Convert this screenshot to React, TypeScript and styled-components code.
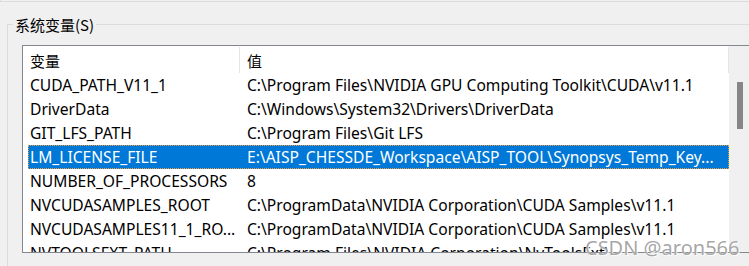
import React from 'react';
import styled, { createGlobalStyle } from 'styled-components';

const GlobalStyle = createGlobalStyle`
  html, body {
    margin: 0;
    padding: 0;
    background: #f0f0f0;
    overflow: hidden;
  }
  body {
    font-family: "Noto Sans", "Noto Sans CJK SC", sans-serif;
    font-size: 15.6px;
    color: #000;
  }
`;

const Page = styled.div`
  position: relative;
  width: 749px;
  height: 266px;
  overflow: hidden;
`;

const PrevGroupEdge = styled.div`
  height: 1px;
  border-left: 1px solid #dcdcdc;
  border-bottom: 1px solid #dcdcdc;
`;

const GroupBox = styled.fieldset`
  margin: 11px 0 0 7px;
  padding: 0 0 40px 0;
  width: 800px;
  border: 1px solid #dcdcdc;
  border-right: none;
  border-bottom: none;
`;

const GroupTitle = styled.legend`
  margin-left: 5px;
  padding: 2px 2px 0;
  line-height: 20px;
  font-family: "Noto Sans CJK SC", sans-serif;
  font-size: 15px;
`;

const ListBox = styled.div`
  margin: 10px 0 0 14px;
  display: flex;
  width: 727px;
  height: 206px;
  border: 1px solid #828790;
  background: #fff;
`;

const ListInner = styled.div`
  flex: 1;
  min-width: 0;
  overflow: hidden;
`;

const Header = styled.div`
  display: grid;
  grid-template-columns: 217px 1fr;
  height: 27px;
`;

const HeaderCell = styled.div<{ $divider?: boolean }>`
  display: flex;
  align-items: center;
  padding-left: 7px;
  font-family: "Noto Sans CJK SC", sans-serif;
  font-size: 15px;
  border-right: ${(p) => (p.$divider ? '1px solid #e5e5e5' : 'none')};
  margin: 1px 0 0;
`;

const Row = styled.div<{ $selected?: boolean }>`
  display: grid;
  grid-template-columns: 212px 1fr;
  height: 24px;
  margin-left: 5px;
  box-sizing: border-box;
  background: ${(p) => (p.$selected ? '#0078d7' : 'transparent')};
  color: ${(p) => (p.$selected ? '#fff' : '#000')};
  outline: ${(p) => (p.$selected ? '1px dotted #f29b3a' : 'none')};
  outline-offset: -1px;
`;

const Cell = styled.div<{ $pad: number }>`
  display: flex;
  align-items: center;
  padding-left: ${(p) => p.$pad}px;
  padding-right: 2px;
  white-space: nowrap;
  overflow: hidden;
`;

const CellText = styled.span`
  overflow: hidden;
  text-overflow: ellipsis;
`;

const ScrollTrack = styled.div`
  width: 21px;
  background: #f0f0f0;
  display: flex;
  flex-direction: column;
  align-items: center;
  padding-top: 36px;
  box-sizing: border-box;
`;

const ScrollThumb = styled.div`
  width: 6px;
  height: 47px;
  background: #868686;
`;

const Watermark = styled.div`
  position: absolute;
  left: 585px;
  top: 234px;
  font-family: "Noto Sans", sans-serif;
  font-size: 20px;
  color: rgba(128, 128, 128, 0.7);
  text-shadow: 0 0 1px #fff, 1px 1px 0 rgba(255, 255, 255, 0.8);
  white-space: nowrap;
`;

type EnvVar = { name: string; value: string; selected?: boolean };

const vars: EnvVar[] = [
  { name: 'CUDA_PATH_V11_1', value: 'C:\\Program Files\\NVIDIA GPU Computing Toolkit\\CUDA\\v11.1' },
  { name: 'DriverData', value: 'C:\\Windows\\System32\\Drivers\\DriverData' },
  { name: 'GIT_LFS_PATH', value: 'C:\\Program Files\\Git LFS' },
  { name: 'LM_LICENSE_FILE', value: 'E:\\AISP_CHESSDE_Workspace\\AISP_TOOL\\Synopsys_Temp_Key...', selected: true },
  { name: 'NUMBER_OF_PROCESSORS', value: '8' },
  { name: 'NVCUDASAMPLES_ROOT', value: 'C:\\ProgramData\\NVIDIA Corporation\\CUDA Samples\\v11.1' },
  { name: 'NVCUDASAMPLES11_1_RO...', value: 'C:\\ProgramData\\NVIDIA Corporation\\CUDA Samples\\v11.1' },
  { name: 'NVTOOLSEXT_PATH', value: 'C:\\Program Files\\NVIDIA Corporation\\NvToolsExt\\' },
];

const App: React.FC = () => {
  return (
    <Page>
      <GlobalStyle />
      <PrevGroupEdge />
      <GroupBox>
        <GroupTitle>系统变量(S)</GroupTitle>
        <ListBox>
          <ListInner>
            <Header>
              <HeaderCell $divider>变量</HeaderCell>
              <HeaderCell $divider>值</HeaderCell>
            </Header>
            {vars.map((v) => (
              <Row key={v.name} $selected={v.selected}>
                <Cell $pad={2}>
                  <CellText>{v.name}</CellText>
                </Cell>
                <Cell $pad={7}>
                  <CellText>{v.value}</CellText>
                </Cell>
              </Row>
            ))}
          </ListInner>
          <ScrollTrack>
            <ScrollThumb />
          </ScrollTrack>
        </ListBox>
      </GroupBox>
      <Watermark>CSDN @aron566</Watermark>
    </Page>
  );
};

export default App;
